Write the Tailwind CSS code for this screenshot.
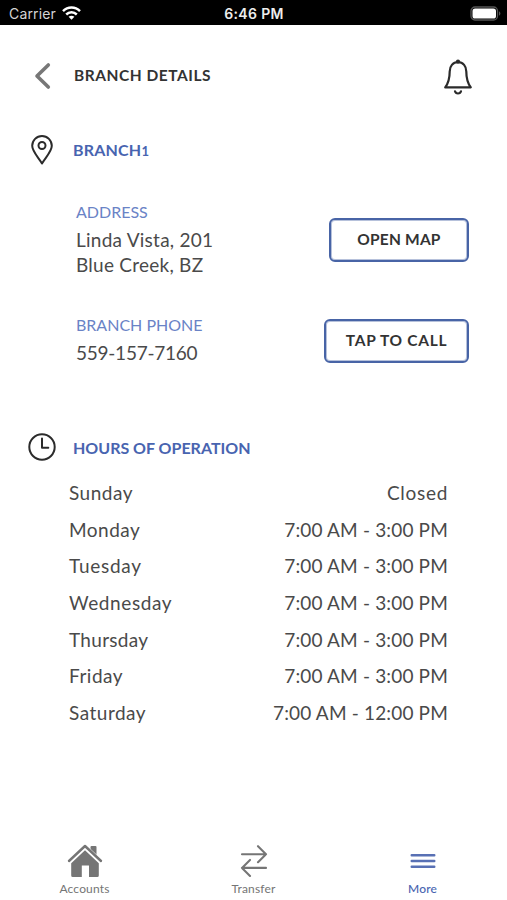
<!DOCTYPE html>
<html lang="en">
<head>
  <meta charset="UTF-8">
  <meta name="viewport" content="width=device-width, initial-scale=1.0">
  <title>Branch Details</title>
  <script src="https://cdn.jsdelivr.net/npm/@tailwindcss/browser@4"></script>
</head>
<body class="bg-white">
<div class="w-[507px] h-[900px] flex flex-col overflow-hidden font-['Lato',sans-serif] text-[#4a4a4a] whitespace-nowrap">

  <!-- Status bar -->
  <div class="h-[25px] shrink-0 bg-black grid grid-cols-3 items-center pt-[3px] pl-[9px] pr-[6px] font-['Inter',sans-serif] text-[14px] leading-none">
    <div class="flex items-center gap-[6px] text-[#d4d4d4]">
      <span class="tracking-[0.15px]">Carrier</span>
      <svg class="w-[19px] h-[14px] -mt-[2px]" viewBox="0 0 19 14" fill="none" stroke="#fff" stroke-width="2.5">
        <path d="M1 5.2C5.8.4 13.2.4 18 5.2M4.2 8.5c3-2.9 7.6-2.9 10.6 0"/>
        <path d="M6.6 10.8c1.7-1.5 4.1-1.5 5.8 0L9.5 13.8z" fill="#fff" stroke="none"/>
      </svg>
    </div>
    <span class="text-center font-semibold text-[#ededed] tracking-[0.35px] -ml-[2px]">6:46 PM</span>
    <svg class="w-[31px] h-[15px] justify-self-end -mt-[2px]" viewBox="0 0 31 15">
      <rect x="1" y="1" width="26.5" height="13" rx="4" fill="none" stroke="#555" stroke-width="1.3"/>
      <rect x="2.5" y="2.5" width="23.5" height="10" rx="2.6" fill="#fff"/>
      <path d="M29 5.3c1.9.8 1.9 3.6 0 4.4z" fill="#555"/>
    </svg>
  </div>

  <!-- Header -->
  <header class="h-[101px] shrink-0 flex items-center pl-[34px] pr-[34px]">
    <svg class="w-[17px] h-[28px]" viewBox="0 0 17 28" fill="none" stroke="#777" stroke-width="3.6" stroke-linecap="round" stroke-linejoin="round">
      <path d="M14.3 3 3 14l11.3 11"/>
    </svg>
    <h1 class="ml-[23px] text-[15.5px] tracking-[0.53px] font-bold text-[#333333]">BRANCH DETAILS</h1>
    <svg class="ml-auto w-[30px] h-[37px] mt-[4px]" viewBox="0 0 30 37" fill="none" stroke="#2b2b2b" stroke-width="2.2" stroke-linecap="round" stroke-linejoin="round">
      <path d="M15 3.2c-5.2 0-8.3 4-8.3 9.2 0 7.2-.8 11-4.5 15.9h25.6c-3.7-4.9-4.5-8.7-4.5-15.9 0-5.2-3.1-9.2-8.3-9.2z"/>
      <path d="M12 32.3c.8 2.9 5.2 2.9 6 0"/>
      <circle cx="15" cy="2.6" r="1" fill="#2b2b2b"/>
    </svg>
  </header>

  <!-- Branch -->
  <div class="h-12 shrink-0 flex items-center pl-[31px]">
    <svg class="w-[22px] h-[30px]" viewBox="0 0 22 30" fill="none" stroke="#2b2b2b" stroke-width="2" stroke-linejoin="round">
      <path d="M11 28.5C7.5 22.5 1.2 16.5 1.2 10.8a9.8 9.8 0 0 1 19.6 0c0 5.700-6.300 11.700-9.800 17.700z"/>
      <circle cx="11" cy="10.5" r="3.5"/>
    </svg>
    <h2 class="ml-[20px] text-[16px] tracking-[0.2px] font-bold text-[#4864b0]">BRANCH<span class="text-[13px]">1</span></h2>
  </div>

  <section class="shrink-0 flex justify-between pl-[76px] pr-[38px] pt-[28px]">
    <div>
      <p class="text-[16px] leading-[20px] text-[#6a83c6]">ADDRESS</p>
      <p class="mt-[6px] text-[19px] leading-[24.5px] tracking-[0.25px]">Linda Vista, 201<br>Blue Creek, BZ</p>
    </div>
    <button class="mt-[16px] w-[140px] h-[44px] rounded-[6px] border-2 border-[#4864a6] ring-1 ring-inset ring-[#4864a6]/40 text-[15.5px] tracking-[0.2px] font-bold text-[#333333]">OPEN MAP</button>
  </section>

  <section class="shrink-0 flex justify-between pl-[76px] pr-[38px] pt-[38px]">
    <div>
      <p class="text-[16px] leading-[20px] text-[#6a83c6]">BRANCH PHONE</p>
      <p class="mt-[6px] text-[19px] leading-[24px] -tracking-[0.25px]">559-157-7160</p>
    </div>
    <button class="mt-[4px] w-[145px] h-[44px] rounded-[6px] border-2 border-[#4864a6] ring-1 ring-inset ring-[#4864a6]/40 text-[15.5px] tracking-[0.7px] font-bold text-[#333333]">TAP TO CALL</button>
  </section>

  <!-- Hours -->
  <div class="h-[48px] mt-[58px] shrink-0 flex items-center pl-[28px]">
    <svg class="w-[28px] h-[28px]" viewBox="0 0 28 28" fill="none" stroke="#2b2b2b" stroke-width="2" stroke-linecap="round" stroke-linejoin="round">
      <circle cx="14" cy="14" r="12.7"/>
      <path d="M14 5.5v9.3h6.3"/>
    </svg>
    <h2 class="ml-[17px] mt-[1px] text-[16px] font-bold text-[#4864b0]">HOURS OF OPERATION</h2>
  </div>
  <dl class="mt-[4px] shrink-0 pl-[69px] pr-[59px] text-[19px]">
    <div class="h-[36.64px] flex items-center justify-between"><dt class="tracking-[0.5px]">Sunday</dt><dd class="tracking-[0.7px]">Closed</dd></div>
    <div class="h-[36.64px] flex items-center justify-between"><dt class="tracking-[0.5px]">Monday</dt><dd class="tracking-[0.16px]">7:00 AM - 3:00 PM</dd></div>
    <div class="h-[36.64px] flex items-center justify-between"><dt class="tracking-[0.7px]">Tuesday</dt><dd class="tracking-[0.16px]">7:00 AM - 3:00 PM</dd></div>
    <div class="h-[36.64px] flex items-center justify-between"><dt class="tracking-[0.6px]">Wednesday</dt><dd class="tracking-[0.16px]">7:00 AM - 3:00 PM</dd></div>
    <div class="h-[36.64px] flex items-center justify-between"><dt class="tracking-[0.3px]">Thursday</dt><dd class="tracking-[0.16px]">7:00 AM - 3:00 PM</dd></div>
    <div class="h-[36.64px] flex items-center justify-between"><dt class="tracking-[0.5px]">Friday</dt><dd class="tracking-[0.16px]">7:00 AM - 3:00 PM</dd></div>
    <div class="h-[36.64px] flex items-center justify-between"><dt class="tracking-[0.5px]">Saturday</dt><dd class="tracking-[0.16px]">7:00 AM - 12:00 PM</dd></div>
  </dl>

  <!-- Tab bar -->
  <nav class="mt-auto h-[57px] shrink-0 grid grid-cols-3 text-[12px] leading-[16px] tracking-[0.15px] text-[#757575]">
    <a href="#" class="flex flex-col items-center">
      <svg class="w-[36px] h-[36px] mb-[2px]" viewBox="0 0 36 36" fill="#757575">
        <path d="M23.5 4q0-1 1-1h4q1 0 1 1v11l-6-5.500z"/>
        <path d="M2 18 18 3l16 15" fill="none" stroke="#fff" stroke-width="3.4"/>
        <path d="M2 18 18 3l16 15" fill="none" stroke="#757575" stroke-width="2.4" stroke-linecap="round" stroke-linejoin="round"/>
        <path d="M18 7.3 31.8 20.3V32.5q0 1.500-1.500 1.500H22V22.500h-7.200V34H5.700q-1.500 0-1.500-1.500V20.300z"/>
      </svg>
      <span>Accounts</span>
    </a>
    <a href="#" class="flex flex-col items-center">
      <svg class="w-[28px] h-[36px] mb-[2px]" viewBox="0 0 28 36" fill="none" stroke="#757575" stroke-width="2.1" stroke-linecap="round" stroke-linejoin="round">
        <path d="M2 11.2h24M18 3.2l8 8-8 8M26 24.9H2M10 16.9l-8 8 8 8"/>
      </svg>
      <span>Transfer</span>
    </a>
    <a href="#" class="flex flex-col items-center text-[#4864b0]">
      <svg class="w-[26px] h-[36px] mb-[2px]" viewBox="0 0 26 36" stroke="#5870b4" stroke-width="2.4" stroke-linecap="round">
        <path d="M1.7 12.2h22.600M1.700 18h22.600M1.700 23.700h22.600"/>
      </svg>
      <span class="font-medium">More</span>
    </a>
  </nav>
</div>
</body>
</html>
